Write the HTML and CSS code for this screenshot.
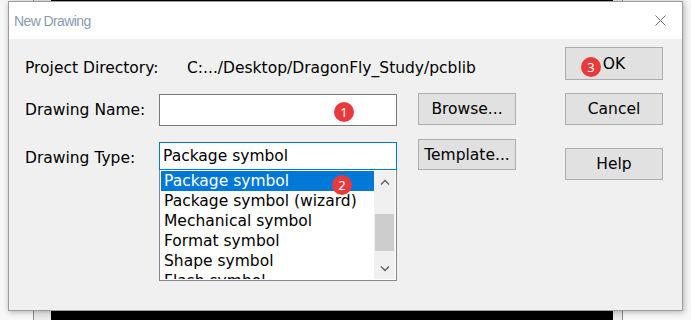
FILE: index.html
```html
<!DOCTYPE html>
<html lang="en">
<head>
    <meta charset="UTF-8">
    <title>New Drawing</title>
    <link rel="stylesheet" href="styles.css">
</head>
<body>
    <div class="dialog">
        <div class="titlebar">
            <span class="title">New Drawing</span>
            <svg class="close" width="11" height="11" viewBox="0 0 11 11">
                <path d="M0.5 0.5 L10.5 10.5 M10.5 0.5 L0.5 10.5" stroke="#6f6f6f" stroke-width="1" fill="none"/>
            </svg>
        </div>
        <div class="content">
            <div class="form">
                <div class="row-dir">
                    <span class="lbl-dir">Project Directory:</span>
                    <span>C:.../Desktop/DragonFly_Study/pcblib</span>
                </div>
                <div class="row row-name">
                    <label class="lbl">Drawing Name:</label>
                    <div class="input"><span class="badge badge-1">1</span></div>
                    <button class="btn">Browse...</button>
                </div>
                <div class="row row-type">
                    <label class="lbl lbl-type">Drawing Type:</label>
                    <div class="field-col">
                        <div class="combo">Package symbol</div>
                        <div class="list">
                            <div class="items">
                                <div class="item selected">Package symbol</div>
                                <div class="item">Package symbol (wizard)</div>
                                <div class="item">Mechanical symbol</div>
                                <div class="item">Format symbol</div>
                                <div class="item">Shape symbol</div>
                                <div class="item">Flash symbol</div>
                            </div>
                            <div class="scrollbar">
                                <div class="arrow">
                                    <svg width="10" height="6" viewBox="0 0 10 6"><path d="M1 5.5 L5 1.5 L9 5.5" stroke="#606060" stroke-width="1.4" fill="none"/></svg>
                                </div>
                                <div class="track"><div class="thumb"></div></div>
                                <div class="arrow">
                                    <svg width="10" height="6" viewBox="0 0 10 6"><path d="M1 0.5 L5 4.5 L9 0.5" stroke="#606060" stroke-width="1.4" fill="none"/></svg>
                                </div>
                            </div>
                            <span class="badge badge-2">2</span>
                        </div>
                    </div>
                    <button class="btn btn-template">Template...</button>
                </div>
            </div>
            <div class="side">
                <button class="btn btn-ok">OK<span class="badge badge-3">3</span></button>
                <button class="btn btn-cancel">Cancel</button>
                <button class="btn">Help</button>
            </div>
        </div>
    </div>
</body>
</html>
```

FILE: styles.css
```css
body {
    margin: 0;
    height: 320px;
    overflow: hidden;
    background: linear-gradient(to right,
        #f7f7f7 0, #f7f7f7 33px,
        #8a8a99 33px, #8a8a99 34px,
        #e9e9e9 34px, #e9e9e9 51px,
        #000 51px, #000 613px,
        #e9e9e9 613px, #e9e9e9 622px,
        #8a8a99 622px, #8a8a99 623px,
        #f7f7f7 623px);
    font-family: "DejaVu Sans", sans-serif;
    font-size: 15.5px;
    color: #000;
}
.dialog {
    margin: 1px 0 0 8px;
    width: 675px;
    height: 310px;
    box-sizing: border-box;
    border: 1px solid #9c9c9c;
    background: #f0f0f0;
    box-shadow: 1px 1px 6px rgba(0, 0, 0, 0.3);
}
.titlebar {
    height: 37px;
    background: #fff;
    display: flex;
    align-items: center;
    padding-left: 5px;
}
.title {
    font-family: "Liberation Sans", sans-serif;
    font-size: 14px;
    letter-spacing: -0.6px;
    color: #8c9ab0;
    flex: 1;
}
.close {
    margin-right: 16px;
}
.content {
    display: flex;
    padding-left: 16px;
}
.form {
    width: 540px;
}
.row-dir {
    margin-top: 19px;
    line-height: 20px;
    display: flex;
}
.lbl-dir {
    width: 162px;
}
.row {
    display: flex;
    margin-top: 16px;
}
.row-name {
    align-items: center;
    height: 32px;
}
.row-type {
    align-items: flex-start;
}
.lbl {
    width: 134px;
    line-height: 20px;
}
.lbl-type {
    margin-top: 6px;
}
.input {
    position: relative;
    width: 238px;
    height: 32px;
    box-sizing: border-box;
    border: 1px solid #7a7a7a;
    background: #fff;
}
.btn {
    width: 98px;
    height: 32px;
    margin-left: 21px;
    padding: 0;
    border: 1px solid #adadad;
    background: #e1e1e1;
    font-family: "DejaVu Sans", sans-serif;
    font-size: 15.5px;
    color: #000;
}
.row-name .btn {
    margin-top: -2px;
}
.btn-template {
    margin-top: -3px;
    height: 31px;
}
.field-col {
    width: 238px;
}
.combo {
    height: 28px;
    box-sizing: border-box;
    border: 1px solid #0078d7;
    background: #fff;
    padding-left: 3px;
    line-height: 26px;
}
.list {
    position: relative;
    height: 111px;
    box-sizing: border-box;
    border: 1px solid #828790;
    border-top: none;
    padding: 1px;
    background: #fff;
    display: flex;
}
.items {
    flex: 1;
    overflow: hidden;
}
.item {
    height: 20px;
    line-height: 20px;
    padding-left: 3px;
    white-space: nowrap;
}
.item.selected {
    background: #0078d7;
    color: #fff;
}
.scrollbar {
    width: 21px;
    background: #f0f0f0;
    display: flex;
    flex-direction: column;
}
.arrow {
    height: 21px;
    display: flex;
    align-items: center;
    justify-content: center;
}
.track {
    flex: 1;
}
.thumb {
    margin: 22px 1px 0 1px;
    height: 37px;
    background: #cdcdcd;
}
.side {
    display: flex;
    flex-direction: column;
    padding-top: 8px;
}
.side .btn {
    margin-left: 0;
}
.btn-ok {
    position: relative;
    height: 33px;
    margin-bottom: 13px;
}
.btn-cancel {
    margin-bottom: 23px;
}
.badge {
    position: absolute;
    width: 20px;
    height: 20px;
    border-radius: 50%;
    background: #e8393c;
    color: #fff;
    font-family: "Noto Sans", sans-serif;
    font-size: 13px;
    line-height: 20px;
    text-align: center;
}
.badge-1 {
    left: 174px;
    top: 7px;
}
.badge-2 {
    left: 172px;
    top: 5px;
}
.badge-3 {
    left: 15px;
    top: 9px;
}
```
